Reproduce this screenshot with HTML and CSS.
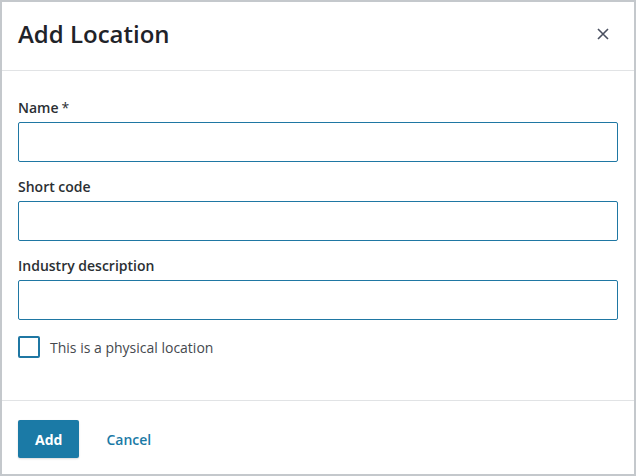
FILE: index.html
```html
<!DOCTYPE html>
<html lang="en">
<head>
    <meta charset="UTF-8">
    <meta name="viewport" content="width=device-width, initial-scale=1.0">
    <title>Add Location</title>
    <link rel="stylesheet" href="styles.css">
</head>
<body>
    <div class="dialog">
        <div class="dialog-header">
            <h2>Add Location</h2>
            <button class="close-button" aria-label="Close">
                <svg width="12" height="12" viewBox="0 0 12 12">
                    <path d="M1 1 L11 11 M11 1 L1 11" stroke="#4a5060" stroke-width="1.6" fill="none"/>
                </svg>
            </button>
        </div>
        <div class="dialog-body">
            <div class="field">
                <label for="name">Name<span class="required">*</span></label>
                <input type="text" id="name">
            </div>
            <div class="field">
                <label for="shortCode">Short code</label>
                <input type="text" id="shortCode">
            </div>
            <div class="field">
                <label for="industry">Industry description</label>
                <input type="text" id="industry">
            </div>
            <label class="checkbox-row">
                <span class="checkbox"></span>
                This is a physical location
            </label>
        </div>
        <div class="dialog-footer">
            <button class="button">Add</button>
            <a href="#" class="link-button">Cancel</a>
        </div>
    </div>
</body>
</html>
```

FILE: styles.css
```css
html, body {
    height: 100%;
}
body {
    font-family: "Open Sans", Arial, sans-serif;
    margin: 0;
    padding: 2px;
    box-sizing: border-box;
    background-color: #c4c8cc; /* grey frame */
}
.dialog {
    background-color: white;
    height: 100%;
    display: flex;
    flex-direction: column;
}
.dialog-header {
    display: flex;
    align-items: center;
    justify-content: space-between;
    padding: 16px 16px 20px 16px;
    border-bottom: 1px solid #e1e3e5;
}
h2 {
    margin: 0;
    font-size: 24px;
    line-height: 32px;
    font-weight: 600;
    color: #1f2329;
}
.close-button {
    background: none;
    border: none;
    padding: 0;
    margin-right: 9px;
    width: 12px;
    height: 12px;
    display: flex;
    cursor: pointer;
}
.dialog-body {
    flex: 1;
    padding: 27px 16px 0 16px;
}
.field {
    display: flex;
    flex-direction: column;
    margin-bottom: 15px;
}
.field label {
    font-size: 14px;
    line-height: 20px;
    font-weight: 600;
    color: #2b2f33;
    margin-bottom: 4px;
}
.required {
    margin-left: 3px;
    font-weight: 400;
}
input {
    height: 40px;
    box-sizing: border-box;
    border: 1px solid #1f77a3;
    border-radius: 2px;
    padding: 0 10px;
    font-size: 14px;
    font-family: inherit;
}
.checkbox-row {
    display: flex;
    align-items: center;
    gap: 10px;
    margin-top: 16px;
    font-size: 14px;
    color: #45494e;
}
.checkbox {
    width: 22px;
    height: 22px;
    box-sizing: border-box;
    border: 2px solid #1f77a3;
    border-radius: 2px;
}
.dialog-footer {
    display: flex;
    align-items: center;
    padding: 19px 16px 16px 16px;
    border-top: 1px solid #e1e3e5;
}
.button {
    background-color: #1b7aa6;
    border: none;
    border-radius: 2px;
    color: white;
    font-family: inherit;
    font-size: 14px;
    font-weight: 700;
    height: 38px;
    padding: 0 17px;
    box-shadow: 0 1px 2px rgba(0, 0, 0, 0.15);
    cursor: pointer;
}
.link-button {
    margin-left: 27px;
    color: #1b7aa6;
    font-size: 14px;
    font-weight: 600;
    text-decoration: none;
}
```
